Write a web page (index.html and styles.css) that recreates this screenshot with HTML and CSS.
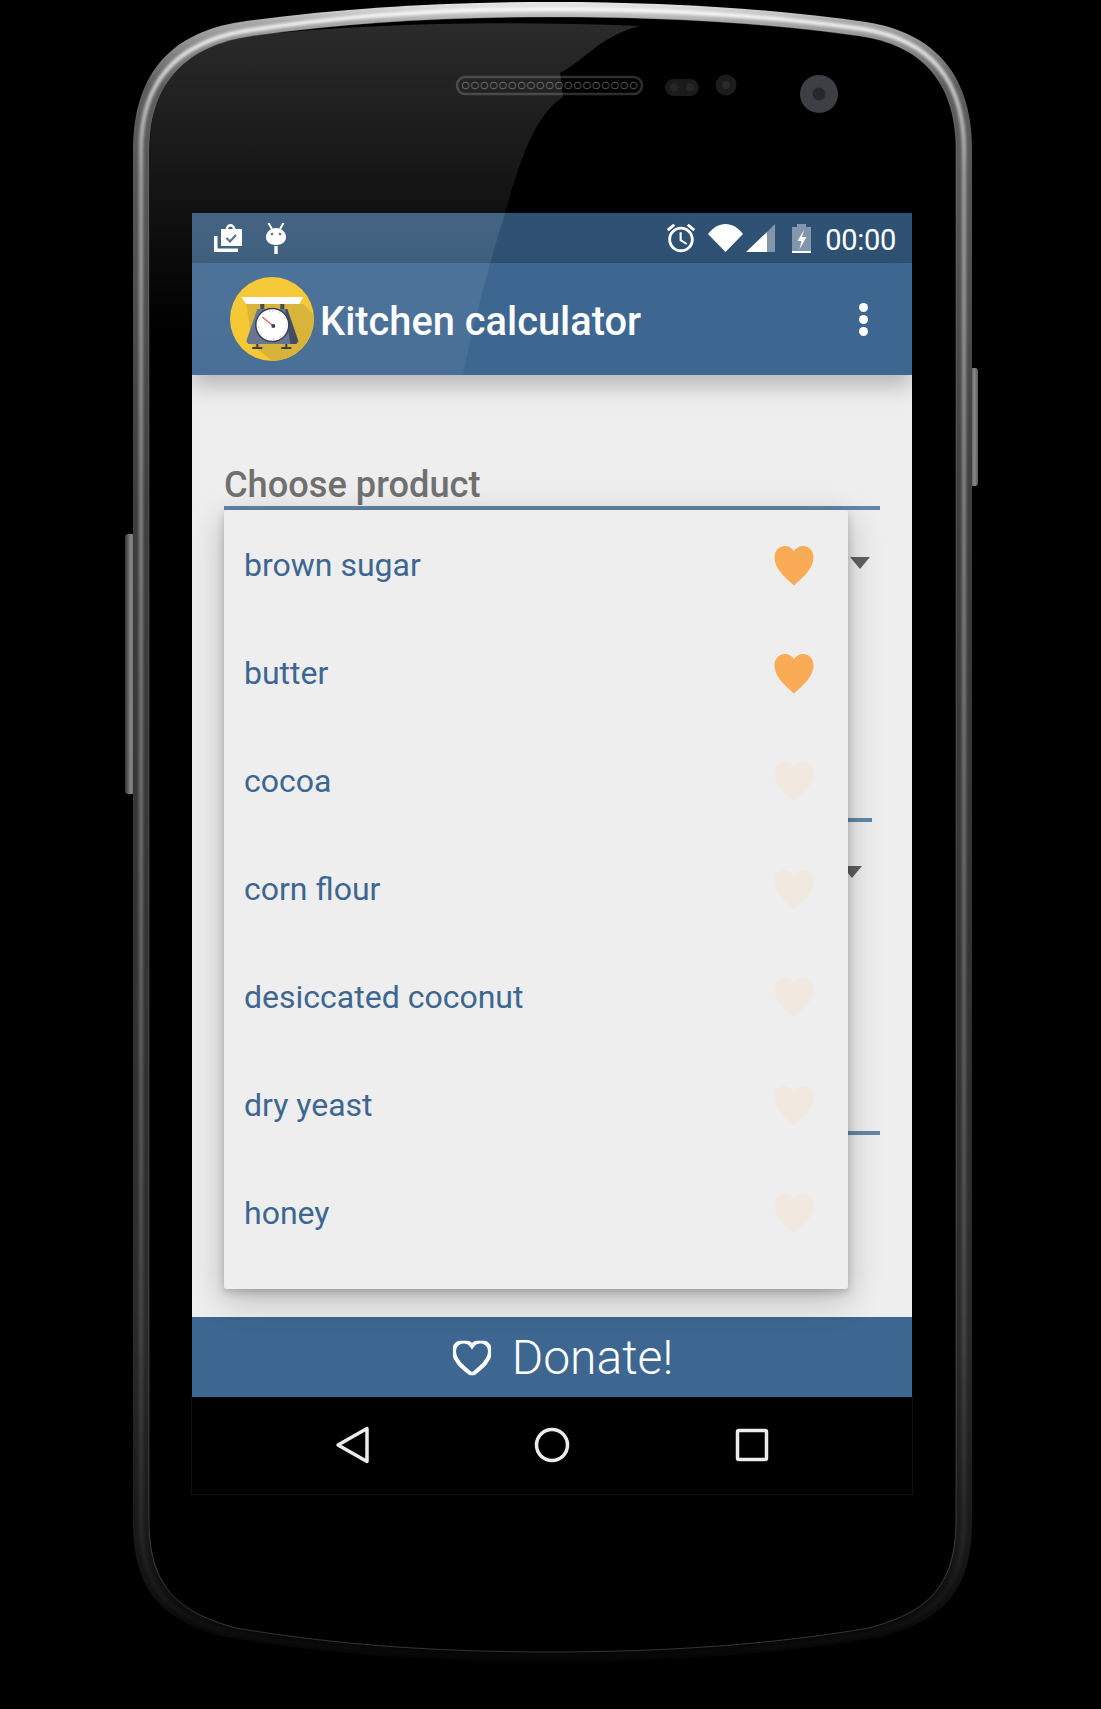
FILE: index.html
```html
<!DOCTYPE html>
<html lang="en">
<head>
    <meta charset="UTF-8">
    <title>Kitchen calculator</title>
    <link rel="stylesheet" href="styles.css">
</head>
<body>
    <svg class="defs" width="0" height="0">
        <symbol id="heart" viewBox="0 0 40 40">
            <path d="M20 39.500C13 33 1 24 1 12 1 5 6 1 11 1c4 0 7 2 9 5 2-3 5-5 9-5 5 0 10 4 10 11 0 12-12 21-19 27.500z"/>
        </symbol>
        <pattern id="holes" x="461" y="76" width="9.330" height="19" patternUnits="userSpaceOnUse">
            <circle cx="4.660" cy="9.500" r="3.400" fill="#000" stroke="#6a6a6a" stroke-width="0.800"/>
        </pattern>
        <linearGradient id="rim" x1="0" y1="0" x2="0" y2="1">
            <stop offset="0" stop-color="#e8e8e8"/>
            <stop offset="0.012" stop-color="#a8a8a8"/>
            <stop offset="0.05" stop-color="#5e5e5e"/>
            <stop offset="0.3" stop-color="#3e3e3e"/>
            <stop offset="0.8" stop-color="#2a2a2a"/>
            <stop offset="0.93" stop-color="#181818"/>
            <stop offset="1" stop-color="#040404"/>
        </linearGradient>
        <linearGradient id="rimline" x1="0" y1="0" x2="0" y2="1">
            <stop offset="0" stop-color="#fff" stop-opacity="0.9"/>
            <stop offset="0.1" stop-color="#fff" stop-opacity="0.45"/>
            <stop offset="0.7" stop-color="#fff" stop-opacity="0.2"/>
            <stop offset="0.93" stop-color="#fff" stop-opacity="0.06"/>
            <stop offset="1" stop-color="#fff" stop-opacity="0.01"/>
        </linearGradient>
        <linearGradient id="key" x1="0" y1="0" x2="1" y2="0">
            <stop offset="0" stop-color="#333"/>
            <stop offset="0.6" stop-color="#8a8a8a"/>
            <stop offset="1" stop-color="#5a5a5a"/>
        </linearGradient>
        <linearGradient id="bezelglare" x1="0" y1="20" x2="0" y2="330" gradientUnits="userSpaceOnUse">
            <stop offset="0" stop-color="#fff" stop-opacity="0.17"/>
            <stop offset="0.6" stop-color="#fff" stop-opacity="0.07"/>
            <stop offset="1" stop-color="#fff" stop-opacity="0"/>
        </linearGradient>
        <linearGradient id="screenglare" x1="0" y1="213" x2="0" y2="375" gradientUnits="userSpaceOnUse">
            <stop offset="0" stop-color="#fff" stop-opacity="0.1"/>
            <stop offset="1" stop-color="#fff" stop-opacity="0.06"/>
        </linearGradient>
        <filter id="soft" x="-5%" y="-5%" width="110%" height="110%"><feGaussianBlur stdDeviation="1.500"/></filter>
        <clipPath id="logoclip"><circle cx="56.7" cy="54" r="42"/></clipPath>
    </svg>

    <div class="phone">
        <!-- device body -->
        <svg class="frame" width="1101" height="1709" viewBox="0 0 1101 1709">
            <rect x="125" y="534" width="10" height="260" rx="3" fill="url(#key)"/>
            <rect x="969" y="368" width="9" height="118" rx="3" fill="url(#key)"/>
            <path fill="url(#rim)" d="M133 150C133 70 175 32 240 22 340 8 450 2 552 2c108 0 218 6 314 20 64 10 106 48 106 128v1370c0 70-27 100-92 117-100 18-220 25-328 25-112 0-222-7-327-25-65-17-92-47-92-117z"/>
            <path fill="none" stroke="url(#rimline)" stroke-width="4" filter="url(#soft)" d="M141 150c0-72 40-108 104-119C345 15 450 9 552 9c108 0 213 6 311 20 62 10 101 46 101 121v1370c0 68-27 96-89 113-100 18-215 24-323 24-112 0-220-6-322-24-62-17-89-45-89-113z"/>
            <path fill="#000" stroke="#a8a8a8" stroke-opacity="0.3" stroke-width="1" d="M149 150c0-70 40-105 102-114C350 22 450 17 552 17c108 0 208 5 308 19 60 9 96 44 96 114v1370c0 65-27 92-87 108-100 17-209 24-317 24-112 0-216-7-316-24-60-16-87-43-87-108z"/>
            <rect x="191.500" y="1397" width="721" height="97.500" fill="none" stroke="#111"/>
            <rect x="457" y="77" width="185" height="17" rx="8.500" fill="#000" stroke="#2f2f2f" stroke-width="2.500"/>
            <rect x="461" y="76" width="177" height="19" fill="url(#holes)"/>
            <rect x="665" y="79" width="34" height="17" rx="8.500" fill="#1b1b1b"/>
            <circle cx="674" cy="87.500" r="4" fill="#262626"/>
            <circle cx="690" cy="87.500" r="4" fill="#262626"/>
            <circle cx="726" cy="85" r="10.500" fill="#1c1c1c"/>
            <circle cx="726" cy="85" r="4" fill="#2a2a2a"/>
            <circle cx="819" cy="94" r="19" fill="#3c3f45"/>
            <circle cx="819" cy="94" r="6.500" fill="#26282c"/>
        </svg>

        <div class="screen">
            <div class="status-bar">
                <div class="status-group">
                    <svg class="ic-bag" viewBox="0 0 28 28" width="28" height="28">
                        <path fill="#fff" d="M7 5h4.500C12 2 14 0 16.500 0S21 2 21.500 5H28v17H7zM14 5h5c-.3-1.600-1.300-2.500-2.500-2.500S14.300 3.400 14 5z"/>
                        <path fill="none" stroke="#45668b" stroke-width="2.200" d="M12.500 14l3.500 3.500 6-6.500"/>
                        <path fill="#fff" d="M0 12h3.500v12.500H24V28H0z"/>
                    </svg>
                    <svg class="ic-robot" viewBox="0 0 20 31" width="20" height="31">
                        <path fill="#fff" d="M10 5c5.500 0 10 4 10 9 0 4-3 8-10 8S0 18 0 14c0-5 4.500-9 10-9z"/>
                        <path stroke="#fff" stroke-width="2" d="M2.500 0l3.500 6M17.500 0L14 6"/>
                        <rect x="8.300" y="23" width="3.400" height="8" fill="#fff"/>
                        <circle cx="6" cy="11" r="1.300" fill="#45668b"/>
                        <circle cx="14" cy="11" r="1.300" fill="#45668b"/>
                    </svg>
                </div>
                <div class="status-group status-right">
                    <svg class="ic-alarm" viewBox="0 0 24 24" width="34" height="34">
                        <path fill="#fff" d="M22 5.720l-4.600-3.860-1.290 1.530 4.600 3.860L22 5.720zM7.880 3.390L6.600 1.860 2 5.710l1.290 1.530 4.590-3.850zM12.500 8H11v6l4.750 2.850.75-1.230-4-2.370V8zM12 4c-4.970 0-9 4.030-9 9s4.020 9 9 9c4.970 0 9-4.030 9-9s-4.030-9-9-9zm0 16c-3.870 0-7-3.130-7-7s3.130-7 7-7 7 3.130 7 7-3.130 7-7 7z"/>
                    </svg>
                    <svg class="ic-wifi" viewBox="0 0 35 28" width="35" height="28">
                        <path fill="#fff" d="M17.500 28L0 10C5 3.500 11 0 17.500 0S30 3.500 35 10z"/>
                    </svg>
                    <svg class="ic-signal" viewBox="0 0 29 28" width="29" height="28">
                        <path fill="#fff" fill-opacity="0.4" d="M29 0v28H21V8z"/>
                        <path fill="#fff" d="M0 28L21 8v20z"/>
                    </svg>
                    <svg class="ic-battery" viewBox="0 0 19 29" width="19" height="29">
                        <path fill="#fff" fill-opacity="0.4" d="M5 0h9v3h5v24H0V3h5z"/>
                        <rect y="27" width="19" height="2" fill="#fff"/>
                        <path fill="#fff" d="M12 6L5.500 17h4L7.500 25l7-12H10z"/>
                    </svg>
                    <span class="clock">00:00</span>
                </div>
            </div>

            <div class="app-bar">
                <svg class="logo" viewBox="14.700 12 84 84" width="84" height="84">
                    <circle cx="56.700" cy="54" r="42" fill="#f4c426"/>
                    <polygon clip-path="url(#logoclip)" fill="#d5ae2b" points="88,39 104,55 104,100 62,100 37,80 31,39"/>
                    <polygon fill="#5b6b8a" points="42,44 72,44 83,76 81,79 33,79 31,76"/>
                    <polygon fill="#343f57" points="70,44 72,44 83,76 81,79 75,79"/>
                    <rect x="45" y="39" width="4" height="5" fill="#333d52"/>
                    <rect x="65" y="39" width="4" height="5" fill="#333d52"/>
                    <path fill="none" stroke="#2a3244" stroke-width="2" d="M37 83h10M42 79v4M66 83h10M71 79v4"/>
                    <polygon fill="#fff" points="26,32 88,32 84,39 31,39"/>
                    <circle cx="57" cy="60" r="16.500" fill="#fff" stroke="#2b3243" stroke-width="1.500"/>
                    <path fill="none" stroke="#9a9a9a" stroke-width="1" stroke-dasharray="1 6" d="M57 46a14 14 0 1 1-.01 0"/>
                    <path stroke="#d9534f" stroke-width="1.200" d="M47 52l11 9"/>
                    <circle cx="58" cy="61" r="2" fill="#2b3243"/>
                </svg>
                <span class="app-title">Kitchen calculator</span>
                <div class="kebab"><i></i><i></i><i></i></div>
            </div>

            <div class="content">
                <div class="field-label">Choose product</div>
                <div class="rule"></div>
                <div class="caret caret-one"></div>
                <div class="rule rule-two"></div>
                <div class="caret caret-two"></div>
                <div class="rule rule-three"></div>

                <ul class="popup">
                    <li class="popup-item"><span>brown sugar</span><svg class="heart on"><use href="#heart"/></svg></li>
                    <li class="popup-item"><span>butter</span><svg class="heart on"><use href="#heart"/></svg></li>
                    <li class="popup-item"><span>cocoa</span><svg class="heart"><use href="#heart"/></svg></li>
                    <li class="popup-item"><span>corn flour</span><svg class="heart"><use href="#heart"/></svg></li>
                    <li class="popup-item"><span>desiccated coconut</span><svg class="heart"><use href="#heart"/></svg></li>
                    <li class="popup-item"><span>dry yeast</span><svg class="heart"><use href="#heart"/></svg></li>
                    <li class="popup-item"><span>honey</span><svg class="heart"><use href="#heart"/></svg></li>
                </ul>
            </div>

            <div class="donate">
                <svg class="donate-heart" viewBox="-2 -2 44 44" width="42" height="38" preserveAspectRatio="none"><use href="#heart" width="40" height="40"/></svg>
                <span>Donate!</span>
            </div>

            <div class="nav-bar">
                <svg viewBox="0 0 40 40" width="40" height="40"><path d="M6 20L35 3.500v33z"/></svg>
                <svg viewBox="0 0 40 40" width="40" height="40"><circle cx="20" cy="20" r="15.500"/></svg>
                <svg viewBox="0 0 40 40" width="40" height="40"><rect x="5.500" y="5.500" width="29" height="29" rx="1.500"/></svg>
            </div>
        </div>

        <!-- reflection on the glass, lies over the screen -->
        <svg class="glare" width="1101" height="1709" viewBox="0 0 1101 1709">
            <path fill="url(#bezelglare)" d="M150 330V150c0-70 38-104 100-114C350 24 500 20 640 26 600 36 585 60 560 73L563 97C535 115 520 160 505 213H192V330z"/>
            <path fill="url(#screenglare)" d="M192 213H505C492 255 475 315 463 375H192z"/>
        </svg>
    </div>
</body>
</html>
```

FILE: styles.css
```css
html,
body {
    margin: 0;
    background: #000;
    overflow: hidden;
}

.defs {
    position: absolute;
}

.phone {
    position: relative;
    width: 1101px;
    height: 1709px;
    box-sizing: border-box;
    padding: 213px 0 0 192px;
    font-family: Roboto, "Liberation Sans", sans-serif;
}

.frame,
.glare {
    position: absolute;
    left: 0;
    top: 0;
}

.glare {
    z-index: 3;
    pointer-events: none;
}

.screen {
    position: relative;
    width: 720px;
    height: 1281px;
    display: flex;
    flex-direction: column;
}

.status-bar {
    height: 50px;
    flex: none;
    display: flex;
    align-items: center;
    justify-content: space-between;
    padding: 0 16px 0 22px;
    background: #2f5274;
}

.status-group {
    display: flex;
    align-items: center;
    gap: 24px;
}

.status-right {
    gap: 0;
}

.ic-alarm {
    margin-right: 10px;
}

.ic-wifi {
    margin-right: 3px;
}

.ic-signal {
    margin-right: 17px;
}

.clock {
    margin-left: 14px;
    padding-top: 3px;
    color: #fff;
    font-size: 29px;
    letter-spacing: -0.3px;
    line-height: 32px;
}

.app-bar {
    height: 112px;
    flex: none;
    display: flex;
    align-items: center;
    padding: 0 44px 0 38px;
    background: #3d6690;
    box-shadow: 0 10px 22px rgba(0, 0, 0, 0.25);
    position: relative;
    z-index: 2;
}

.logo {
    margin-right: 6px;
}

.app-title {
    flex: 1;
    padding-top: 4px;
    color: #fff;
    font-size: 39.800px;
    font-weight: 500;
}

.kebab {
    display: flex;
    flex-direction: column;
    gap: 3px;
}

.kebab i {
    width: 9px;
    height: 9px;
    border-radius: 50%;
    background: #fff;
}

.content {
    position: relative;
    flex: none;
    height: 942px;
    box-sizing: border-box;
    padding: 1px 32px 0;
    background: #eeeeee;
}

.field-label {
    margin-top: 87px;
    color: #707070;
    font-size: 36.200px;
    font-weight: 500;
    line-height: 43px;
}

.rule {
    height: 4px;
    background: #6487a8;
}

.rule-two {
    width: 648px;
    margin-top: 249px;
}

.rule-three {
    margin-top: 253px;
}

.caret {
    width: 0;
    height: 0;
    border-style: solid;
    border-width: 12px 10px 0;
    border-color: #606060 transparent transparent;
}

.caret-one {
    margin: 47px 0 0 626px;
}

.caret-two {
    margin: 44px 0 0 618px;
}

.popup {
    position: absolute;
    left: 32px;
    top: 135px;
    width: 624px;
    margin: 0;
    padding: 1px 0 22px;
    list-style: none;
    background: #eeeeee;
    border-radius: 3px;
    box-shadow: 0 3px 8px rgba(0, 0, 0, 0.2), 0 10px 34px rgba(0, 0, 0, 0.24);
}

.popup-item {
    height: 108px;
    display: flex;
    align-items: center;
    justify-content: space-between;
    padding: 0 33px 0 20px;
    color: #3d6690;
    font-size: 32px;
}

.heart {
    width: 42px;
    height: 41px;
    margin-top: 1px;
    fill: #f1e9df;
}

.heart.on {
    fill: #f9ab56;
}

.donate {
    height: 80px;
    flex: none;
    box-sizing: border-box;
    display: flex;
    align-items: center;
    justify-content: center;
    gap: 19px;
    padding: 1px 0 0 20px;
    background: #3d6690;
    color: #fff;
    font-size: 48px;
    font-weight: 300;
}

.donate-heart {
    fill: none;
    stroke: #fff;
    stroke-width: 4.500;
}

.nav-bar {
    flex: 1;
    display: flex;
    justify-content: center;
    align-items: flex-start;
    gap: 160px;
    padding-top: 28px;
    background: #000;
}

.nav-bar svg {
    fill: none;
    stroke: #ececec;
    stroke-width: 3.500;
    stroke-linejoin: round;
}
```
